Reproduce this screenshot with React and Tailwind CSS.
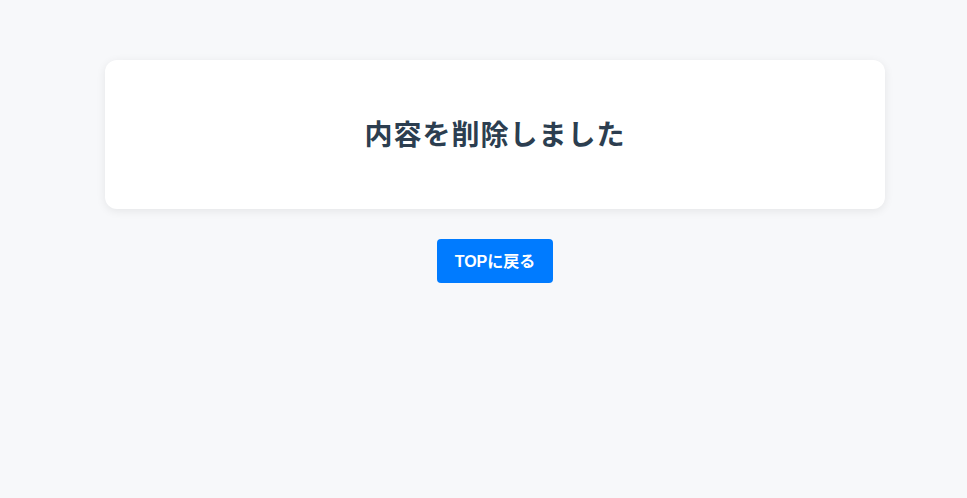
export default function App() {
  return (
    <div
      className="min-h-[498px] w-full bg-[#f7f8fa] pt-[60px] pl-[105px] pr-[82px]"
      style={{ fontFamily: '"Liberation Sans", "Noto Sans CJK JP", sans-serif' }}
    >
      <div className="flex h-[149px] w-full items-center justify-center rounded-[12px] bg-white pt-[3px] shadow-[0_2px_10px_rgba(0,0,0,0.08)]">
        <h1 className="text-[28px] font-bold leading-none tracking-[1px] text-[#2c3e50]">
          内容を削除しました
        </h1>
      </div>
      <div className="mt-[30px] flex justify-center">
        <button className="flex h-[44px] w-[116px] items-center justify-center rounded-[4px] bg-[#007bff] pt-[2px] text-[16px] font-bold text-white">
          TOPに戻る
        </button>
      </div>
    </div>
  );
}
